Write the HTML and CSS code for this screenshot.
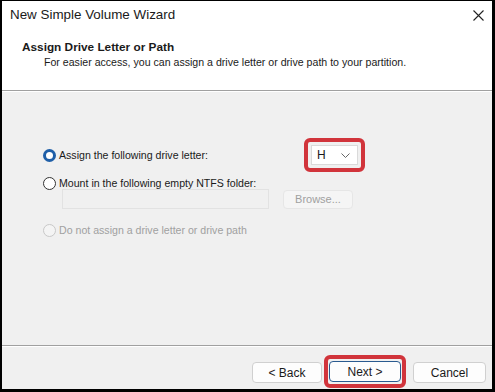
FILE: index.html
```html
<!DOCTYPE html>
<html>
<head>
<meta charset="utf-8">
<link rel="stylesheet" href="styles.css">
</head>
<body>
<div class="window">
  <div class="header">
    <div class="titlebar">
      <span class="title">New Simple Volume Wizard</span>
      <svg class="close" width="11" height="11" viewBox="0 0 11 11"><path d="M0.5 0.5 L10.5 10.5 M10.5 0.5 L0.5 10.5" stroke="#222" stroke-width="1.1" fill="none"/></svg>
    </div>
    <div class="heading">Assign Drive Letter or Path</div>
    <div class="subheading">For easier access, you can assign a drive letter or drive path to your partition.</div>
  </div>
  <div class="content">
    <div class="row">
      <label class="option">
        <span class="radio checked"></span>
        <span>Assign the following drive letter:</span>
      </label>
      <div class="highlight highlight-select">
        <div class="select"><span>H</span>
          <svg width="9" height="5" viewBox="0 0 9 5"><path d="M0.5 0.5 L4.5 4.5 L8.5 0.5" stroke="#666" stroke-width="1" fill="none"/></svg>
        </div>
      </div>
    </div>
    <label class="option option-mount">
      <span class="radio"></span>
      <span>Mount in the following empty NTFS folder:</span>
    </label>
    <div class="folder-row">
      <div class="textbox"></div>
      <div class="btn btn-disabled">Browse...</div>
    </div>
    <label class="option option-disabled">
      <span class="radio disabled"></span>
      <span>Do not assign a drive letter or drive path</span>
    </label>
  </div>
  <div class="footer">
    <div class="btn btn-footer btn-back">&lt; Back</div>
    <div class="highlight highlight-next">
      <div class="btn btn-footer btn-default">Next &gt;</div>
    </div>
    <div class="btn btn-footer btn-cancel">Cancel</div>
  </div>
</div>
</body>
</html>
```

FILE: styles.css
```css
* { box-sizing: border-box; }
html, body { margin: 0; padding: 0; background: #000; }
body { font-family: "Liberation Sans", Arial, sans-serif; color: #1a1a1a; }
.window {
  width: 495px;
  height: 392px;
  border-left: 2px solid #000;
  border-top: 1px solid #000;
  border-right: 3px solid #000;
  border-bottom: 3px solid #000;
  background: #f0f0f0;
  display: flex;
  flex-direction: column;
}
.header {
  background: #fff;
  height: 90px;
  flex: none;
  border-bottom: 1px solid #a0a0a0;
}
.titlebar {
  height: 27px;
  display: flex;
  align-items: center;
  justify-content: space-between;
  padding: 0 8px 0 8px;
}
.title { font-size: 13.4px; color: #1a1a1a; }
.close { display: block; margin-top: 1px; }
.heading {
  font-size: 11.8px;
  font-weight: bold;
  margin: 12px 0 0 20px;
  line-height: 15px;
}
.subheading {
  font-size: 10.6px;
  margin: 0 0 0 42px;
  line-height: 15px;
}
.content {
  flex: 1;
  padding: 56px 0 0 41px;
  font-size: 10.6px;
  border-top: 1px solid #fff;
  border-bottom: 1px solid #a0a0a0;
}
.row { display: flex; align-items: center; justify-content: space-between; width: 322px; height: 14px; }
.option { display: flex; align-items: center; gap: 3px; height: 14px; }
.option-mount { margin-top: 14px; }
.option-disabled { color: #a0a0a0; margin-top: 14px; }
.radio {
  width: 13px; height: 13px;
  border-radius: 50%;
  border: 1px solid #333;
  background: #fff;
  flex: none;
}
.radio.checked {
  border: 3.5px solid #1f5fa8;
  background: #fff;
}
.radio.disabled { border-color: #c8c8c8; background: #f4f4f4; }
.highlight {
  border: 4px solid #d1343b;
  border-radius: 6px;
  padding: 3px;
  flex: none;
}
.select {
  width: 47px; height: 20px;
  background: #fff;
  border: 1px solid #dadada;
  display: flex; align-items: center; justify-content: space-between;
  padding: 0 7px 0 5px;
  font-size: 12px;
}
.folder-row { display: flex; align-items: center; gap: 14px; margin: -1px 0 0 19px; }
.textbox {
  width: 207px; height: 20px;
  border: 1px solid #e2e2e2;
  background: #f0f0f0;
}
.btn {
  display: flex; align-items: center; justify-content: center;
  font-size: 11px;
  border-radius: 4px;
}
.btn-disabled {
  width: 70px; height: 19px;
  background: #f5f5f5;
  border: 1px solid #e6e6e6;
  color: #a0a0a0;
}
.footer {
  height: 43px;
  flex: none;
  display: flex;
  align-items: flex-start;
  justify-content: flex-end;
  padding: 15px 6px 0 0;
  border-top: 1px solid #fff;
}
.btn-footer {
  height: 21px;
  background: #fdfdfd;
  border: 1px solid #d0d0d0;
  color: #1a1a1a;
  font-size: 12px;
}
.btn-back { width: 70px; }
.btn-cancel { width: 73px; }
.btn-default { width: 72px; border: 1px solid #2a5a8f; }
.highlight-next { margin: -7px 7px 0 2px; height: 33px; display: flex; align-items: center; padding: 0 1px; }
```
